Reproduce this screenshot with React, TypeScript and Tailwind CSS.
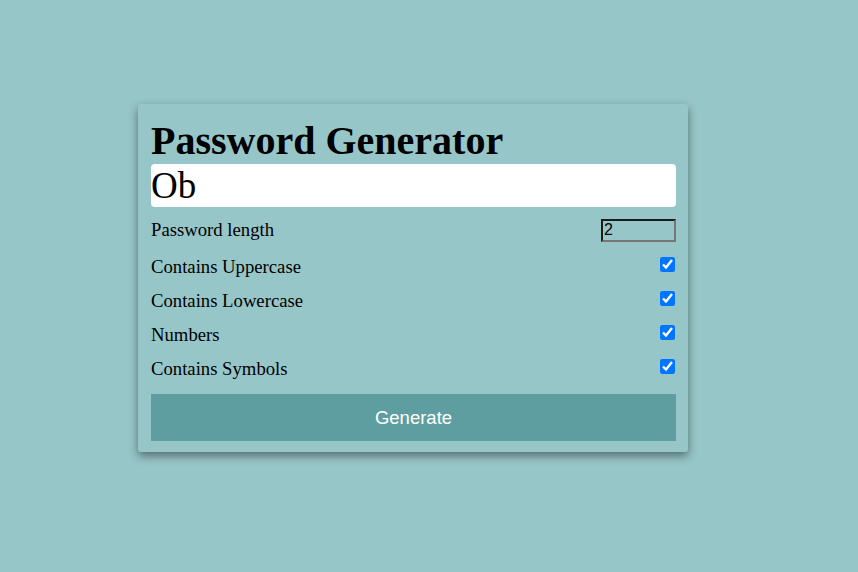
import { useState } from "react"

const options = ["Contains Uppercase", "Contains Lowercase", "Numbers", "Contains Symbols"]

export default function App() {
  const [length, setLength] = useState("2")
  const [checked, setChecked] = useState([true, true, true, true])

  return (
    <div className="min-h-[572px] w-full bg-[#97c6c8] pt-[104px] pl-[138px] font-['Liberation_Serif',serif] text-black">
      <div className="w-[550px] rounded-[3px] bg-[#97c6c8] pt-[14px] pl-[13px] pr-[12px] pb-[11px] shadow-[0_4px_10px_rgba(0,0,0,0.45)]">
        {/* Title */}
        <h1 className="text-[40px] leading-[46px] font-bold">Password Generator</h1>

        {/* Result */}
        <div className="h-[43px] rounded-[4px] bg-white text-[37px] leading-[43px]">Ob</div>

        {/* Settings */}
        <div className="mt-[6px]">
          <div className="flex h-[34px] items-center justify-between text-[18.7px]">
            <span>Password length</span>
            <input
              type="text"
              value={length}
              onChange={(e) => setLength(e.target.value)}
              className="h-[23px] w-[75px] border-2 border-t-[#1b1b1b] border-l-[#1b1b1b] border-b-[#767676] border-r-[#767676] bg-transparent px-[1px] font-['Liberation_Sans',sans-serif] text-[16px] leading-none outline-none"
            />
          </div>
          {options.map((label, i) => (
            <div key={label} className="flex h-[34px] items-center justify-between text-[18.7px]">
              <span className="mt-[6px]">{label}</span>
              <input
                type="checkbox"
                checked={checked[i]}
                onChange={() => setChecked(checked.map((c, j) => (j === i ? !c : c)))}
                className="mr-[1px] h-[15px] w-[15px] accent-[#0075ff]"
              />
            </div>
          ))}
        </div>

        {/* Action */}
        <button className="mt-[11px] h-[47px] w-full bg-[#5f9ea0] font-['Liberation_Sans',sans-serif] text-[18.5px] text-white">
          Generate
        </button>
      </div>
    </div>
  )
}
